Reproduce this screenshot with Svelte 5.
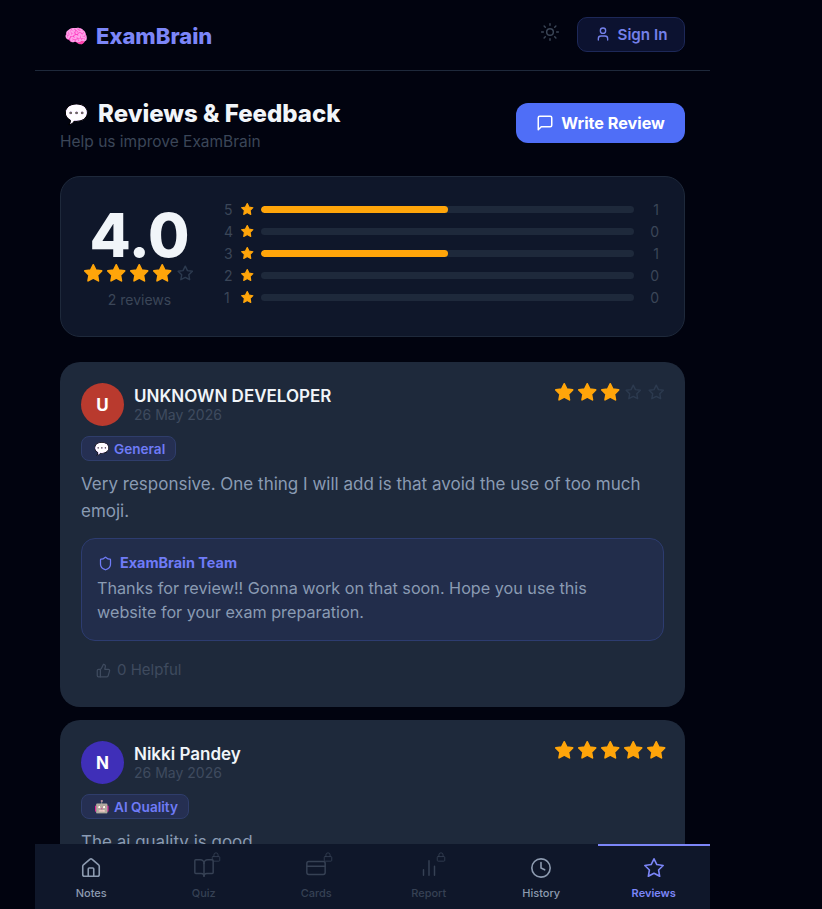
<script>
  const paths = {
    sun: '<circle cx="12" cy="12" r="4"/><path d="M12 2v2M12 20v2M4.93 4.93l1.41 1.41M17.66 17.66l1.41 1.41M2 12h2M20 12h2M6.34 17.66l-1.41 1.41M19.07 4.93l-1.41 1.41"/>',
    user: '<path d="M19 21v-2a4 4 0 0 0-4-4H9a4 4 0 0 0-4 4v2"/><circle cx="12" cy="7" r="4"/>',
    message: '<path d="M21 15a2 2 0 0 1-2 2H7l-4 4V5a2 2 0 0 1 2-2h14a2 2 0 0 1 2 2z"/>',
    home: '<path d="M15 21v-8a1 1 0 0 0-1-1h-4a1 1 0 0 0-1 1v8"/><path d="M3 10a2 2 0 0 1 .709-1.528l7-5.999a2 2 0 0 1 2.582 0l7 5.999A2 2 0 0 1 21 10v9a2 2 0 0 1-2 2H5a2 2 0 0 1-2-2z"/>',
    book: '<path d="M12 7v14"/><path d="M3 18a1 1 0 0 1-1-1V4a1 1 0 0 1 1-1h5a4 4 0 0 1 4 4 4 4 0 0 1 4-4h5a1 1 0 0 1 1 1v13a1 1 0 0 1-1 1h-6a3 3 0 0 0-3 3 3 3 0 0 0-3-3z"/>',
    card: '<rect x="2" y="5" width="20" height="14" rx="2"/><path d="M2 10h20"/>',
    chart: '<path d="M18 20V10M12 20V4M6 20v-6"/>',
    clock: '<circle cx="12" cy="12" r="10"/><path d="M12 6v6l4 2"/>',
    star: '<polygon points="12 2 15.09 8.26 22 9.27 17 14.14 18.18 21.02 12 17.77 5.82 21.02 7 14.14 2 9.27 8.91 8.26 12 2"/>',
    lock: '<rect x="3" y="11" width="18" height="11" rx="2"/><path d="M7 11V7a5 5 0 0 1 10 0v4"/>',
    shield: '<path d="M20 13c0 5-3.5 7.5-7.66 8.95a1 1 0 0 1-.67-.01C7.5 20.5 4 18 4 13V6a1 1 0 0 1 1-1c2 0 4.5-1.2 6.24-2.72a1.17 1.17 0 0 1 1.52 0C14.51 3.81 17 5 19 5a1 1 0 0 1 1 1z"/>',
    thumb: '<path d="M7 10v12"/><path d="M15 5.88 14 10h5.83a2 2 0 0 1 1.92 2.56l-2.33 8A2 2 0 0 1 17.5 22H4a2 2 0 0 1-2-2v-8a2 2 0 0 1 2-2h2.76a2 2 0 0 0 1.79-1.11L12 2a3.13 3.13 0 0 1 3 3.88Z"/>'
  };

  const bars = [
    { n: 5, count: 1, pct: 50 },
    { n: 4, count: 0, pct: 0 },
    { n: 3, count: 1, pct: 50 },
    { n: 2, count: 0, pct: 0 },
    { n: 1, count: 0, pct: 0 }
  ];

  const reviews = [
    {
      name: "UNKNOWN DEVELOPER", initial: "U", color: "#b93a2e", date: "26 May 2026", rating: 3,
      emoji: "💬", kind: "bubble", tag: "General",
      text: "Very responsive. One thing I will add is that avoid the use of too much emoji.",
      reply: "Thanks for review!! Gonna work on that soon. Hope you use this website for your exam preparation.",
      helpful: 0
    },
    {
      name: "Nikki Pandey", initial: "N", color: "#3f2fb8", date: "26 May 2026", rating: 5,
      emoji: "🤖", kind: "robot", tag: "AI Quality",
      text: "The ai quality is good",
      helpful: 0
    }
  ];

  const tabs = [
    { label: "Notes", icon: "home" },
    { label: "Quiz", icon: "book", locked: true },
    { label: "Cards", icon: "card", locked: true },
    { label: "Report", icon: "chart", locked: true },
    { label: "History", icon: "clock" },
    { label: "Reviews", icon: "star", active: true }
  ];
</script>

{#snippet icon(name, size, sw = 2)}
  <svg width={size} height={size} viewBox="0 0 24 24" fill="none" stroke="currentColor" stroke-width={sw} stroke-linecap="round" stroke-linejoin="round">{@html paths[name]}</svg>
{/snippet}

{#snippet stars(rating)}
  {#each [1, 2, 3, 4, 5] as i}
    <svg class:on={i <= rating} class="star" width="18.5" height="18.5" viewBox={i <= rating ? "1 1 22 22" : "-1 -1 26 26"} stroke-width="2" stroke-linejoin="round">{@html paths.star}</svg>
  {/each}
{/snippet}

<div class="page">
  <div class="shell">
    <header>
      <div class="logo"><span class="emoji brain">🧠</span> ExamBrain</div>
      <div class="actions">
        <span class="theme">{@render icon("sun", 20, 1.75)}</span>
        <button class="signin">{@render icon("user", 16)} Sign In</button>
      </div>
    </header>

    <main>
      <div class="heading">
        <div>
          <h1><span class="emoji bubble">💬</span> Reviews &amp; Feedback</h1>
          <p>Help us improve ExamBrain</p>
        </div>
        <button class="write">{@render icon("message", 18)} Write Review</button>
      </div>

      <section class="summary">
        <div class="score">
          <div class="big">4.0</div>
          <div class="score-stars">{@render stars(4)}</div>
          <div class="total">2 reviews</div>
        </div>
        <div class="bars">
          {#each bars as b}
            <div class="bar-row">
              <span class="n">{b.n}</span>
              <svg class="star on" width="12.5" height="12.5" viewBox="1 1 22 22" stroke-width="2" stroke-linejoin="round">{@html paths.star}</svg>
              <div class="track"><div class="fill" style="width: {b.pct}%"></div></div>
              <span class="count">{b.count}</span>
            </div>
          {/each}
        </div>
      </section>

      {#each reviews as r}
        <article>
          <div class="top">
            <div class="avatar" style="background: {r.color}">{r.initial}</div>
            <div class="who">
              <div class="name">{r.name}</div>
              <div class="date">{r.date}</div>
            </div>
            <div class="rating">{@render stars(r.rating)}</div>
          </div>
          <div class="tag"><span class="emoji {r.kind}">{r.emoji}</span> {r.tag}</div>
          <p class="text">{r.text}</p>
          {#if r.reply}
            <div class="reply">
              <div class="team">{@render icon("shield", 15)} ExamBrain Team</div>
              <p>{r.reply}</p>
            </div>
          {/if}
          <div class="helpful">{@render icon("thumb", 15)} {r.helpful} Helpful</div>
        </article>
      {/each}
    </main>

    <nav>
      {#each tabs as t}
        <div class="tab" class:active={t.active} class:locked={t.locked}>
          <span class="tab-icon">
            {@render icon(t.icon, 22, t.active || !t.locked ? 1.75 : 1.6)}
            {#if t.locked}<span class="lock">{@render icon("lock", 10)}</span>{/if}
          </span>
          <span>{t.label}</span>
        </div>
      {/each}
    </nav>
  </div>
</div>

<style>
  :global(body) {
    background: #01030f;
    font-family: Inter, "Noto Sans", sans-serif;
  }
  .page {
    height: 909px;
    overflow: hidden;
  }
  .shell {
    width: 675px;
    margin-left: 35px;
  }
  button {
    font-family: inherit;
    cursor: pointer;
    display: flex;
    align-items: center;
  }
  .brain {
    filter: hue-rotate(-35deg) saturate(1.8);
  }
  .bubble {
    filter: sepia(0.35) hue-rotate(225deg) saturate(1.4);
  }
  .robot {
    filter: sepia(0.35) hue-rotate(-45deg) saturate(1.7);
  }
  header {
    height: 70px;
    border-bottom: 1px solid #1e293b;
    display: flex;
    align-items: center;
    justify-content: space-between;
    padding: 0 25px 0 29px;
  }
  .logo {
    display: flex;
    align-items: center;
    gap: 8px;
    margin-top: 2px;
    font-size: 22px;
    font-weight: 800;
    color: #7c86f8;
  }
  .logo .emoji {
    font-size: 19.5px;
  }
  .actions {
    display: flex;
    align-items: center;
    gap: 17px;
    margin-top: -2px;
  }
  .theme {
    display: flex;
    color: #3b4657;
    margin-top: -5px;
  }
  .signin {
    height: 35px;
    width: 108px;
    justify-content: center;
    gap: 7px;
    background: #0c1230;
    border: 1px solid #1d2858;
    border-radius: 10px;
    color: #7480ea;
    font-size: 15.2px;
    font-weight: 600;
  }
  main {
    padding: 31px 25px 0;
  }
  .heading {
    display: flex;
    justify-content: space-between;
    align-items: flex-start;
  }
  h1 {
    margin: 0 0 0 4px;
    display: flex;
    align-items: center;
    gap: 9px;
    font-size: 24px;
    line-height: 24px;
    font-weight: 800;
    color: #f1f5f9;
  }
  h1 .emoji {
    font-size: 20px;
  }
  .heading p {
    margin: 6px 0 0;
    font-size: 15.5px;
    line-height: 20px;
    color: #3b4658;
  }
  .write {
    margin-top: 1px;
    height: 40px;
    width: 169px;
    justify-content: center;
    gap: 7px;
    background: #4f6ef7;
    border: 0;
    border-radius: 12px;
    color: #fff;
    font-size: 16.2px;
    font-weight: 700;
  }
  .summary {
    margin-top: 24px;
    height: 161px;
    box-sizing: border-box;
    background: #0f172a;
    border: 1px solid #1e293b;
    border-radius: 20px;
    display: flex;
    align-items: flex-start;
    padding: 0 25px 0 24px;
    gap: 30px;
  }
  .score {
    width: 109px;
    padding-top: 27px;
    text-align: center;
  }
  .big {
    font-size: 60px;
    line-height: 62px;
    margin-bottom: -2px;
    font-weight: 800;
    color: #f1f5f9;
  }
  .score-stars {
    display: flex;
    justify-content: center;
    gap: 4.5px;
    height: 19px;
  }
  .total {
    margin-top: 7px;
    font-size: 14px;
    line-height: 20px;
    color: #3b4658;
  }
  .star {
    fill: none;
    stroke: #2c3a4f;
    flex: none;
  }
  .star.on {
    fill: #ffa50a;
    stroke: #ffa50a;
  }
  .bars {
    flex: 1;
    display: flex;
    flex-direction: column;
    gap: 4px;
    padding-top: 23px;
  }
  .bar-row {
    height: 18px;
    display: flex;
    align-items: center;
    font-size: 14px;
    color: #3b4658;
  }
  .n {
    width: 17px;
  }
  .bar-row .star {
    margin-right: 7.5px;
  }
  .track {
    flex: 1;
    height: 7px;
    border-radius: 4px;
    background: #1e293b;
    overflow: hidden;
  }
  .fill {
    height: 100%;
    border-radius: 4px;
    background: #ffa50a;
  }
  .count {
    width: 25px;
    text-align: right;
  }
  article {
    margin-top: 25px;
    background: #1e293b;
    border-radius: 20px;
    padding: 21px 21px 25px;
  }
  article + article {
    margin-top: 13px;
  }
  .top {
    display: flex;
    align-items: center;
    gap: 10px;
  }
  .avatar {
    width: 43px;
    height: 43px;
    border-radius: 50%;
    display: flex;
    align-items: center;
    justify-content: center;
    color: #fff;
    font-size: 17px;
    font-weight: 700;
  }
  .who {
    flex: 1;
    margin-top: -2px;
  }
  .name {
    font-size: 17px;
    line-height: 22px;
    font-weight: 600;
    color: #f1f5f9;
  }
  .date {
    font-size: 14px;
    line-height: 16px;
    color: #3f4b5f;
  }
  .rating {
    display: flex;
    gap: 4.5px;
    align-self: flex-start;
    margin-right: -1.5px;
  }
  .tag {
    margin-top: 10px;
    width: fit-content;
    height: 25px;
    box-sizing: border-box;
    padding: 0 10px 0 12px;
    display: flex;
    align-items: center;
    gap: 4px;
    background: #252f52;
    border: 1px solid #2f3d6b;
    border-radius: 8px;
    font-size: 13.6px;
    font-weight: 600;
    color: #6f7bf7;
  }
  .tag .emoji {
    font-size: 12.5px;
  }
  .text {
    margin: 10px 0 0;
    font-size: 17px;
    line-height: 27px;
    color: #8a9bb3;
  }
  .reply {
    margin-top: 13px;
    background: #222d4b;
    border: 1px solid #2d3c70;
    border-radius: 14px;
    padding: 14px 15px 16px;
  }
  .team {
    display: flex;
    align-items: center;
    gap: 7px;
    margin-left: 1px;
    font-size: 14.4px;
    line-height: 20px;
    font-weight: 700;
    color: #6f7bf7;
  }
  .reply p {
    margin: 3px 0 0;
    font-size: 16.2px;
    line-height: 24px;
    color: #8a9bb3;
  }
  .helpful {
    margin: 17px 0 0 15px;
    display: flex;
    align-items: center;
    gap: 6px;
    font-size: 15px;
    line-height: 24px;
    color: #3f4b5f;
  }
  nav {
    position: fixed;
    left: 35px;
    bottom: 0;
    width: 675px;
    height: 65px;
    background: #0f172a;
    display: grid;
    grid-template-columns: repeat(6, 1fr);
  }
  .tab {
    box-sizing: border-box;
    display: flex;
    flex-direction: column;
    align-items: center;
    gap: 7px;
    padding-top: 13px;
    font-size: 11px;
    font-weight: 500;
    color: #8d9bb0;
  }
  .tab.locked {
    color: #364154;
  }
  .tab.active {
    color: #7c86f8;
    font-weight: 600;
    border-top: 2px solid #7c86f8;
    padding-top: 11px;
  }
  .tab-icon {
    position: relative;
    display: flex;
  }
  .lock {
    position: absolute;
    top: -5px;
    right: -6px;
    display: flex;
  }
</style>
